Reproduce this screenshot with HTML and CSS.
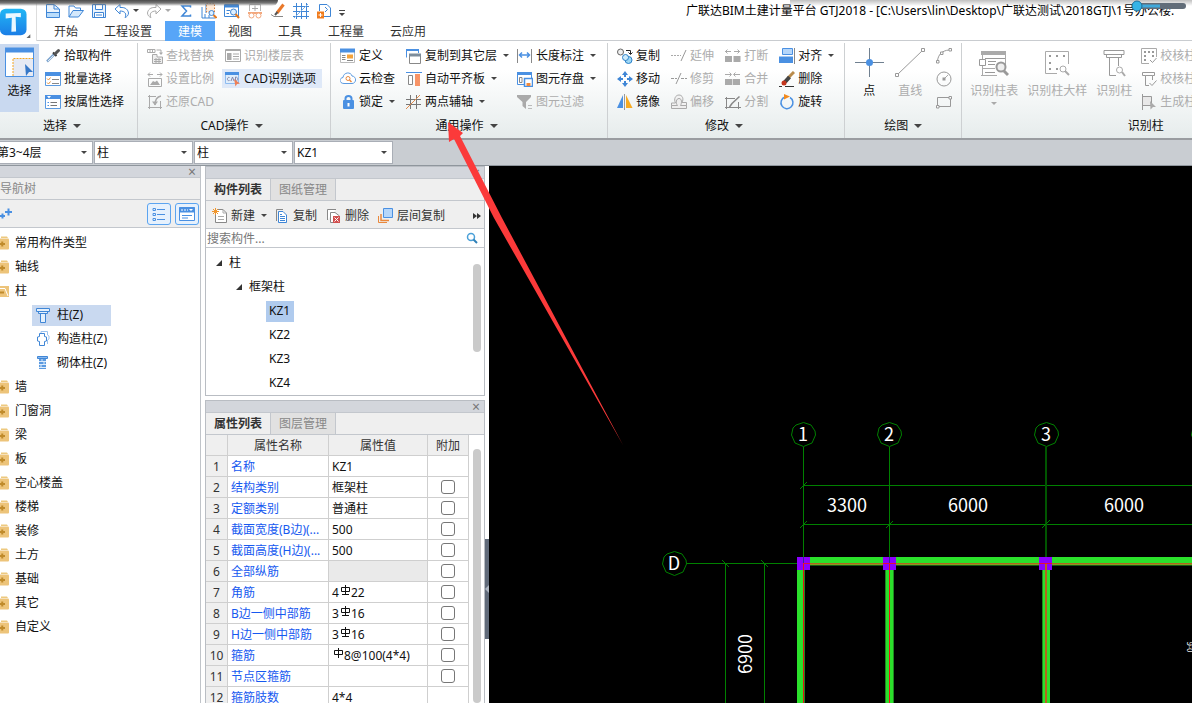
FILE: index.html
```
<!DOCTYPE html>
<html lang="zh-CN">
<head>
<meta charset="utf-8">
<title>广联达BIM土建计量平台 GTJ2018</title>
<link rel="stylesheet" href="styles.css">
</head>
<body>
<svg class="sprite" aria-hidden="true">
  <symbol id="i-doc" viewBox="0 0 16 16"><path d="M1.500 14.500V1.500H9L14.500 6V14.500Z" fill="#eaf3fc" stroke="#3f86d6"/><path d="M9 2V6H14" fill="none" stroke="#3f86d6"/><path d="M2 9H14V14H2Z" fill="#b9dcfb"/><path d="M2 9.500H14" stroke="#3f86d6"/></symbol>
  <symbol id="i-open" viewBox="0 0 16 16"><path d="M1 14V3H6L7.500 5H12.500V7" fill="#fff" stroke="#3f86d6"/><path d="M1 14L5 7.500H15.500L10.500 14Z" fill="#d4e8fb" stroke="#3f86d6"/></symbol>
  <symbol id="i-save" viewBox="0 0 16 16"><path d="M1.500 1.500H14.500V14.500H1.500Z" fill="#eaf3fc" stroke="#3f86d6"/><path d="M4.500 2V6.500H11.500V2M3.500 14V9.500H12.500V14" fill="#fff" stroke="#3f86d6"/><path d="M5 12H11" stroke="#3f86d6"/></symbol>
  <symbol id="i-undo" viewBox="0 0 16 16"><path d="M1 6L6 1.500V4.500C12 4 14 7 14.500 10C14.500 12 13 14 11 14.500C13 11 11 8 6 8V11Z" fill="#fff" stroke="#3f86d6"/></symbol>
  <symbol id="i-redo" viewBox="0 0 16 16"><path d="M15 6L10 1.500V4.500C4 4 2 7 1.500 10C1.500 12 3 14 5 14.500C3 11 5 8 10 8V11Z" fill="#fff" stroke="#aaa"/></symbol>
  <symbol id="i-sum" viewBox="0 0 16 16"><path d="M12.500 4.500V3H4L8.500 8L4 13H12.500V11.500" fill="none" stroke="#3f86d6" stroke-width="1.500"/></symbol>
  <symbol id="i-pick" viewBox="0 0 16 16"><path d="M5 1V10M1 4V15H14M4 11V15M8 12V15" fill="none" stroke="#3f86d6"/><path d="M5.500 0.500H13.500V9H5.500Z" fill="#ffe9d6" stroke="#d9803c" stroke-dasharray="1.500 1.500"/><circle cx="10.500" cy="10" r="2.500" fill="#dff0ff" stroke="#3f86d6"/><path d="M12.500 12L15.500 15" stroke="#e5791e" stroke-width="2"/></symbol>
  <symbol id="i-find" viewBox="0 0 16 16"><path d="M.5 1.500H14.500V13.500H.5Z" fill="#fff" stroke="#3f86d6"/><path d="M1 3H14" stroke="#3f86d6" stroke-width="3"/><path d="M2.500 7.500H6M2.500 10.500H5" stroke="#3f86d6"/><circle cx="9.500" cy="9" r="3" fill="#dff0ff" stroke="#3f86d6"/><path d="M11.500 11L15 15" stroke="#e5791e" stroke-width="2"/></symbol>
  <symbol id="i-goggle" viewBox="0 0 16 16"><path d="M2.500 8V1.500H13.500V8" fill="#fff" stroke="#b5b5b5"/><path d="M5 5.500H11M8 2.500V8" stroke="#aaa"/><path d="M1 10H15" stroke="#f3a77c" stroke-width="2"/><circle cx="4.500" cy="12.500" r="2.500" fill="#fff" stroke="#f3a77c"/><circle cx="11.500" cy="12.500" r="2.500" fill="#fff" stroke="#f3a77c"/></symbol>
  <symbol id="i-pen" viewBox="0 0 16 16"><path d="M13.500 1.500L7 10" stroke="#e9782a" stroke-width="3"/><path d="M7.500 9L5 12" stroke="#555" stroke-width="2"/><path d="M1 11.500L4 13.500H13" fill="none" stroke="#888"/></symbol>
  <symbol id="i-grid" viewBox="0 0 16 16"><path d="M3.500 0V16M8.500 0V16M13.500 0V16M0 3.500H16M0 8.500H16M0 13.500H16" stroke="#3f86d6" fill="none"/><path d="M1 15L15 1" stroke="#7fb0e6"/></symbol>
  <symbol id="i-import" viewBox="0 0 16 16"><path d="M3.500 8V1.500H11L14.500 5V13.500H8" fill="#fff" stroke="#3f86d6"/><path d="M9 4L11.500 6.500L9 9" fill="none" stroke="#3f86d6"/><path d="M1 8.500H8V15.500H1Z" fill="#f07c1e"/><path d="M2.500 12H6.500M4.500 10V14" stroke="#fff"/></symbol>
  <symbol id="i-dropper" viewBox="0 0 16 16"><path d="M2 13.500L9 6.500" stroke="#7fa6cf" stroke-width="2.500"/><path d="M3 13L8.500 7.500" stroke="#dfeaf5"/><path d="M8 4.500L11.500 8" stroke="#333" stroke-width="2"/><path d="M10 6L13.500 2.500" stroke="#555" stroke-width="3" stroke-linecap="round"/></symbol>
  <symbol id="i-batch" viewBox="0 0 16 16"><path d="M.5 1.500H15.500V14.500H.5Z" fill="#fff" stroke="#5b9ae0"/><path d="M0 3H16" stroke="#4a90e2" stroke-width="4"/><path d="M2 7.500L3.500 9L5.500 6.500M2 11.500L3.500 13L5.500 10.500" fill="none" stroke="#e8923a"/><path d="M7 8.500H14M7 12.500H14" stroke="#888"/></symbol>
  <symbol id="i-attr" viewBox="0 0 16 16"><path d="M.5 1.500H15.500V14.500H.5Z" fill="#fff" stroke="#5b9ae0"/><path d="M0 3H16" stroke="#4a90e2" stroke-width="4"/><path d="M2 2H6L4 4.500Z" fill="#fff"/><path d="M5.500 8.500H12M5.500 11.500H12" stroke="#777"/><path d="M2.500 8.500H4M2.500 11.500H4" stroke="#4a90e2"/></symbol>
  <symbol id="i-replace" viewBox="0 0 16 16"><path d="M.5 1.500H8V4.500H.5ZM3 1V5M5.500 1V5M9.500 2H14V5" fill="none" stroke="#aaa"/><path d="M12 4.500H16L14 7Z" fill="#aaa"/><path d="M5.500 6.500H10V9H15.500V15.500H5.500Z" fill="#eee" stroke="#aaa"/><path d="M7 11.500H14M7 13.500H14M9 10V15M12 10V15" stroke="#aaa"/></symbol>
  <symbol id="i-scale" viewBox="0 0 16 16"><path d="M1 3.500H6M10 3.500H15M3 1.500L1 3.500L3 5.500M13 1.500L15 3.500L13 5.500M1.500 7.500H14.500V15.500H1.500Z" fill="none" stroke="#aaa"/><path d="M3 14L6 10L8 11L10 9.500L13 14Z" fill="#aaa"/></symbol>
  <symbol id="i-restore" viewBox="0 0 16 16"><path d="M1 2.500H9M2.500 1V15M1 13.500H15M13.500 7V15" fill="none" stroke="#aaa"/><path d="M14 2C9 3 8 7 8 11" fill="none" stroke="#aaa" stroke-width="1.500"/><path d="M5 7.500H11L8 11.500Z" fill="#aaa"/></symbol>
  <symbol id="i-floor" viewBox="0 0 16 16"><path d="M.5 1.500H15.500V13.500H.5Z" fill="#fff" stroke="#aaa"/><path d="M0 2.500H16M8 6H14M8 8.500H14M8 11H14" stroke="#aaa"/><path d="M2 5H6.500V12H2Z" fill="#aaa"/></symbol>
  <symbol id="i-cadopt" viewBox="0 0 16 16"><path d="M.5 1.500H13.500V12.500H.5Z" fill="#dfeefc" stroke="#8fbcf0"/><path d="M0 2.500H14" stroke="#4a90e2" stroke-width="3"/><path d="M4.500 6.500C2 5.500 1.500 10.500 4.500 9.500M6 10L7.500 6L9 10M10.500 6V10C13.500 10 13.500 6 10.500 6" fill="none" stroke="#88a"/><path d="M9 8L15 12.500L12 13L10.500 15.500Z" fill="#ee7f56"/></symbol>
  <symbol id="i-define" viewBox="0 0 16 16"><path d="M.5 1.500H14.500V14.500H.5Z" fill="#fff" stroke="#bbb"/><path d="M0 2.500H15" stroke="#4a90e2" stroke-width="4"/><path d="M2 7.500H5.500M2 9.500H5.500M2 11.500H5.500M7 12.500H13" stroke="#888"/><path d="M7 6.500H13V10.500H7Z" fill="#f5a33b"/></symbol>
  <symbol id="i-cloud" viewBox="0 0 16 16"><path d="M4 12.500C-1 12.500-1 7 3 6.500C3.500 1 11 .5 12 5C17 5.500 16.500 12.500 12 12.500Z" fill="#fff" stroke="#5b9ae0"/><circle cx="8" cy="7.500" r="2" fill="#fff" stroke="#e9883c"/><path d="M9.500 9L11.500 11" stroke="#e9883c" stroke-width="1.500"/></symbol>
  <symbol id="i-lock" viewBox="0 0 16 16"><path d="M5.500 8V4.500C5.500 1 11.500 1 11.500 4.500V8" fill="none" stroke="#4a90e2" stroke-width="2"/><rect x="3" y="6" width="11" height="9" rx="1" fill="#4a90e2"/><path d="M8.500 9V12.500" stroke="#fff" stroke-width="2"/></symbol>
  <symbol id="i-copyfloor" viewBox="0 0 16 16"><path d="M.5 9.500V1.500H12.500V5" fill="#fff" stroke="#4a90e2"/><path d="M0 2H13" stroke="#4a90e2" stroke-width="2"/><path d="M3.500 6.500H14.500V15.500H3.500Z" fill="#fff" stroke="#888"/><path d="M3 7H15" stroke="#7d8d9b" stroke-width="3"/></symbol>
  <symbol id="i-align-slab" viewBox="0 0 16 16"><path d="M0 1.500H16" stroke="#4a90e2"/><path d="M2.500 4.500H6.500V13.500H2.500Z" fill="#fff" stroke="#888"/><path d="M9 3H14V15H9Z" fill="#f79467"/></symbol>
  <symbol id="i-twopt" viewBox="0 0 16 16"><path d="M4.500 1V15M10.500 1V15M0 5.500H15M0 10.500H15" stroke="#777"/><path d="M0 15L14 1" stroke="#e08a4b"/></symbol>
  <symbol id="i-dim" viewBox="0 0 16 16"><path d="M.5 1V15M14.500 1V15" stroke="#888"/><path d="M3 7H12M5 4.500L2.500 7L5 9.500M10 4.500L12.500 7L10 9.500" fill="none" stroke="#4a90e2" stroke-width="1.500"/></symbol>
  <symbol id="i-store" viewBox="0 0 16 16"><path d="M.5 1.500H14.500V13.500H.5Z" fill="#fff" stroke="#4a90e2"/><path d="M0 2.500H15" stroke="#4a90e2" stroke-width="3"/><path d="M2.500 6.500H5V11.500H2.500Z" fill="#fff" stroke="#888"/><path d="M7.500 7.500H15.500V15.500H7.500Z" fill="#fff" stroke="#4a90e2" stroke-width="1.500"/><path d="M9.500 12H13.500V15H9.500Z" fill="#f28a3c"/></symbol>
  <symbol id="i-filter" viewBox="0 0 16 16"><path d="M0 1H14V3L9 8V15L5.500 12V8L0 3Z" fill="#aaa"/><path d="M11 11.500H15M11 14.500H15" stroke="#bbb"/></symbol>
  <symbol id="i-copy" viewBox="0 0 16 16"><circle cx="3.500" cy="4" r="3" fill="#eee" stroke="#666"/><path d="M9 2.500H13.500V6M11.500 4.500L13.500 6.500L15.500 4.500" fill="none" stroke="#222"/><circle cx="11.500" cy="12" r="3.500" fill="#9fd8f5" stroke="#2a80c8"/><circle cx="8.500" cy="9.500" r="3" fill="#cdeafa" stroke="#2a80c8"/></symbol>
  <symbol id="i-move" viewBox="0 0 16 16"><path d="M8 0L11 4H9V6H7V4H5ZM8 16L11 12H9V10H7V12H5ZM0 8L4 5V7H6V9H4V11ZM16 8L12 5V7H10V9H12V11Z" fill="#3f86d6"/></symbol>
  <symbol id="i-mirror" viewBox="0 0 16 16"><path d="M0 14L6 1V14Z" fill="#4a90e2"/><path d="M7.500 0V16" stroke="#999"/><path d="M9 1L15.500 14H9Z" fill="#f8ab21"/></symbol>
  <symbol id="i-extend" viewBox="0 0 16 16"><path d="M0 7.500H10" stroke="#aaa" stroke-dasharray="2 1"/><path d="M10 13L15 2" stroke="#999"/></symbol>
  <symbol id="i-trim" viewBox="0 0 16 16"><path d="M0 7.500H6M10 7.500H16" stroke="#999" stroke-dasharray="3 1"/><path d="M5 13L10 2" stroke="#999"/></symbol>
  <symbol id="i-offset" viewBox="0 0 16 16"><path d="M.5 12.500V9H4.500C2.500 5 4.500 1 8 1C11.500 1 13 5 11 8.500H15.500V12" fill="#f2f2f2" stroke="#aaa"/><path d="M.5 14.500V11.500H6.500C4.500 9 5 4.500 8 4.500C11 4.500 11 9 9.500 11.500H15.500V14.500Z" fill="#eee" stroke="#aaa"/></symbol>
  <symbol id="i-break" viewBox="0 0 16 16"><path d="M0 3.500H6M9 3.500H15M2.500 1.500L.5 3.500L2.500 5.500M12.500 1.500L14.500 3.500L12.500 5.500" fill="none" stroke="#aaa"/><path d="M0 8H7V14H0ZM8.500 8H15.500V14H8.500Z" fill="#aaa"/></symbol>
  <symbol id="i-merge" viewBox="0 0 16 16"><path d="M0 3.500H6M9 3.500H15M4.500 1.500L6.500 3.500L4.500 5.500M10.500 1.500L8.500 3.500L10.500 5.500" fill="none" stroke="#aaa"/><path d="M0 8H15V14H0Z" fill="#aaa"/><path d="M7.500 8V14" stroke="#ddd"/></symbol>
  <symbol id="i-split" viewBox="0 0 16 16"><path d="M0 4.500H10M1.500 3V15M0 13.500H16M13.500 8V15" fill="none" stroke="#888"/><path d="M14.500 2.500L7 9.500L4.500 13" stroke="#888" stroke-width="1.500" fill="none"/></symbol>
  <symbol id="i-align" viewBox="0 0 16 16"><path d="M3.500 .5H13.500V6.500H3.500Z" fill="#b5d6fa" stroke="#4a90e2"/><path d="M0 8.500H14V15H0Z" fill="#4a90e2"/><path d="M15.500 0V16" stroke="#888"/></symbol>
  <symbol id="i-erase" viewBox="0 0 16 16"><path d="M15 1L9 7" stroke="#b98b4b" stroke-width="3"/><path d="M10.500 6L6 11" stroke="#444" stroke-width="4"/><circle cx="5" cy="12" r="2.500" fill="#c4361e"/><path d="M0 15.500H3M6 15.500H15" stroke="#333"/></symbol>
  <symbol id="i-rotate" viewBox="0 0 16 16"><path d="M11 3.500A6 6 0 1 1 6 3" fill="none" stroke="#4a90e2" stroke-width="1.500"/><path d="M5 0L11 2.500L5 5.500Z" fill="#f28a1e"/></symbol>
  <symbol id="i-arc" viewBox="0 0 16 16"><path d="M1.500 13C2 7 6 2.500 13 2" fill="none" stroke="#999"/><path d="M.5 12.500H3V15H.5ZM4.500 4H7V6.500H4.500ZM13 .5H15.500V3H13Z" fill="#fff" stroke="#999"/></symbol>
  <symbol id="i-circle" viewBox="0 0 16 16"><circle cx="8" cy="8" r="7" fill="none" stroke="#999"/><path d="M8 8L12 4" stroke="#aaa"/><rect x="6.500" y="6.500" width="3" height="3" fill="#999"/></symbol>
  <symbol id="i-rect" viewBox="0 0 16 16"><path d="M1.500 3.500H14.500V12.500H1.500Z" fill="none" stroke="#999"/><path d="M.5 11.500H3V14H.5ZM13 2.500H15.500V5H13Z" fill="#fff" stroke="#999"/></symbol>
  <symbol id="i-chk1" viewBox="0 0 16 16"><path d="M8 15.500H.5V.5H15.500V9" fill="#fff" stroke="#aaa"/><path d="M3 3H5V5H3ZM7 3H9V5H7ZM11 3H13V5H11ZM3 7H5V9H3ZM3 11H5V13H3ZM11 7H13V9H11Z" fill="#999"/><path d="M9 12L11.500 14.500L15.500 10" fill="none" stroke="#999"/></symbol>
  <symbol id="i-chk2" viewBox="0 0 16 16"><path d="M1.500 1.500H13.500V4.500H11.500V9M1.500 1.500V4.500H4.500V14.500H8M4.500 4.500H11.500" fill="none" stroke="#999"/><path d="M8.500 12L11 14.500L15.500 9.500" fill="none" stroke="#999"/></symbol>
  <symbol id="i-gen" viewBox="0 0 16 16"><path d="M1.500 0V16M1.500 2.500H10.500V11.500H1.500" fill="#e8e8e8" stroke="#999"/><path d="M9 7L15 13H12L9.500 15.500Z" fill="#aaa"/></symbol>
  <symbol id="i-new" viewBox="0 0 16 16"><path d="M3.500 6V14.500H14.500V5L11 1.500H6" fill="#fff" stroke="#888"/><path d="M11 1.500V5H14.500M6 8.500H12M6 11.500H12" fill="none" stroke="#aaa"/><path d="M1 1L6 6M6 1L1 6M3.500 0V7M0 3.500H7" stroke="#f0952b"/></symbol>
  <symbol id="i-pcopy" viewBox="0 0 16 16"><path d="M2.500 13V1.500H9" fill="none" stroke="#888"/><path d="M4.500 3.500H9L12.500 7V14.500H4.500Z" fill="#fff" stroke="#3f86d6"/><path d="M6 8.500H11M6 10.500H11M6 12.500H11M6 6.500H8" stroke="#3f86d6"/></symbol>
  <symbol id="i-pdel" viewBox="0 0 16 16"><path d="M1.500 12V1.500H10M4.500 13V4.500H9L13.500 8V14.500H4.500Z" fill="#fff" stroke="#888"/><path d="M7 8H14V15H7Z" fill="#d14f4f"/><path d="M8.500 9.500L12.500 13.500M12.500 9.500L8.500 13.500" stroke="#fff"/></symbol>
  <symbol id="i-layer" viewBox="0 0 16 16"><path d="M.5 8V14.500H9" fill="none" stroke="#e9883c"/><path d="M3 6V12.500H11" fill="none" stroke="#e9883c" stroke-width="1.500"/><path d="M5.500 .5H14.500V9.500H5.500Z" fill="#b5d6fa" stroke="#4a90e2"/></symbol>
  <symbol id="i-search" viewBox="0 0 16 16"><circle cx="7" cy="7" r="3.500" fill="#fff" stroke="#4aa0d8" stroke-width="1.500"/><path d="M9.500 9.500L13 13" stroke="#2f80b8" stroke-width="2"/></symbol>
  <symbol id="i-folder" viewBox="0 0 16 16"><path d="M8 1.500H14L15 3H8Z" fill="#edc97f"/><rect x="0" y="3.500" width="16" height="11" rx="1" fill="#edc47a"/><path d="M6.500 9H12M9.250 6.500V11.500" stroke="#c08b2c" stroke-width="2"/></symbol>
  <symbol id="i-folder-open" viewBox="0 0 16 16"><path d="M0 3H16V14H0Z" fill="#edc47a"/><path d="M6 5.500H12L15 13" fill="none" stroke="#fff"/><path d="M6 9.500H11" stroke="#c08b2c" stroke-width="2"/></symbol>
  <symbol id="i-col" viewBox="0 0 16 16"><path d="M1.500 1.500H14.500V4.500H1.500ZM3.500 4.500V6.500H12.500V4.500M5.500 6.500V15.500H10.500V6.500" fill="#e4f0fc" stroke="#3f86d6"/></symbol>
  <symbol id="i-col2" viewBox="0 0 16 16"><path d="M6 2V.5H12.500V4L14 5V8L12.500 9V13" fill="none" stroke="#9cc2ee"/><path d="M4.500 2.500H9.500V5.500L11.500 6V10L9.500 10.500V14.500H4.500V10.500L2.500 10V6L4.500 5.500Z" fill="#fff" stroke="#3f86d6"/></symbol>
  <symbol id="i-col3" viewBox="0 0 16 16"><path d="M2.500 1.500H12.500V3.500H2.500Z" fill="#8bb9ee" stroke="#3f86d6"/><path d="M4 4H11V14H4Z" fill="#5b9ae0"/><path d="M4 6.500H11M4 9.500H11M4 12.500H11M7 4V6M9 7V9M6 10V12" stroke="#dcebfb"/></symbol>
  <symbol id="i-rebar" viewBox="0 0 12 12"><path d="M6.500 0V10M3 9.500H10M2.500 2.500H10.500V6.500H2.500Z" fill="none" stroke="#111"/></symbol>
  <symbol id="i-rebar2" viewBox="0 0 12 12"><path d="M6.500 0V10M2.500 2.500H10.500V6.500H2.500Z" fill="none" stroke="#111"/></symbol>
</svg>

<div class="app">
  <header class="top">
    <button class="logo" aria-label="主菜单">
      <svg width="38" height="41" viewBox="0 0 38 41"><defs><linearGradient id="lg" x1="0" y1="0" x2="0" y2="1"><stop offset="0" stop-color="#21b7f5"/><stop offset="1" stop-color="#1b7ee6"/></linearGradient></defs><rect x="0" y="8" width="28" height="28" rx="6" fill="url(#lg)"/><path d="M6 13L22 12.500V17L16.500 16.500L17 32L12 32.500L12.500 17.500L6 18.500Z" fill="#eaf8ff"/><path d="M32 35V39H28Z" fill="#666"/></svg>
    </button>
    <div class="top-main">
      <div class="titlebar">
        <nav class="quick" aria-label="快速访问">
          <button aria-label="新建工程"><svg class="ic"><use href="#i-doc"/></svg></button>
          <button aria-label="打开"><svg class="ic"><use href="#i-open"/></svg></button>
          <button aria-label="保存"><svg class="ic"><use href="#i-save"/></svg></button>
          <button aria-label="撤销"><svg class="ic"><use href="#i-undo"/></svg><i class="arr"></i></button>
          <button aria-label="重做"><svg class="ic"><use href="#i-redo"/></svg><i class="arr dim"></i></button>
          <button aria-label="汇总"><svg class="ic"><use href="#i-sum"/></svg></button>
          <button aria-label="查看"><svg class="ic"><use href="#i-pick"/></svg></button>
          <button aria-label="查找"><svg class="ic"><use href="#i-find"/></svg></button>
          <button aria-label="检查"><svg class="ic"><use href="#i-goggle"/></svg></button>
          <button aria-label="编辑"><svg class="ic"><use href="#i-pen"/></svg></button>
          <button aria-label="轴网"><svg class="ic"><use href="#i-grid"/></svg></button>
          <button aria-label="导入"><svg class="ic"><use href="#i-import"/></svg></button>
          <button class="more" aria-label="更多"><i class="arr"></i></button>
        </nav>
        <div class="title">广联达BIM土建计量平台 GTJ2018 - [C:\Users\lin\Desktop\广联达测试\2018GTJ\1号办公楼.</div>
      </div>
      <nav class="tabs">
        <button>开始</button><button>工程设置</button><button class="on">建模</button><button>视图</button><button>工具</button><button>工程量</button><button>云应用</button>
      </nav>
    </div>
  </header>

  <section class="ribbon">
    <div class="group g-first">
      <div class="cols">
        <button class="big sel"><svg width="29" height="30" viewBox="0 0 29 30"><path d="M.5 1.500H28.500V29.500H.5Z" fill="#fff" stroke="#4a90e2"/><path d="M0 3H29" stroke="#4a90e2" stroke-width="5"/><path d="M8 11.500H28V29H8Z" fill="#e6eaf4"/><path d="M8 29V11.500H28" fill="none" stroke="#f5a623" stroke-dasharray="2 1"/><path d="M20 17L28 25H24L21 29Z" fill="#3778c8"/></svg>选择</button>
        <div class="col">
          <button class="tb"><svg class="ic"><use href="#i-dropper"/></svg>拾取构件</button>
          <button class="tb"><svg class="ic"><use href="#i-batch"/></svg>批量选择</button>
          <button class="tb"><svg class="ic"><use href="#i-attr"/></svg>按属性选择</button>
        </div>
      </div>
      <button class="glabel">选择<i class="arr lg"></i></button>
    </div>
    <div class="group">
      <div class="cols">
        <div class="col">
          <button class="tb off"><svg class="ic"><use href="#i-replace"/></svg>查找替换</button>
          <button class="tb off"><svg class="ic"><use href="#i-scale"/></svg>设置比例</button>
          <button class="tb off"><svg class="ic"><use href="#i-restore"/></svg>还原CAD</button>
        </div>
        <div class="col">
          <button class="tb off"><svg class="ic"><use href="#i-floor"/></svg>识别楼层表</button>
          <button class="tb hot"><svg class="ic"><use href="#i-cadopt"/></svg>CAD识别选项</button>
        </div>
      </div>
      <button class="glabel">CAD操作<i class="arr lg"></i></button>
    </div>
    <div class="group">
      <div class="cols">
        <div class="col">
          <button class="tb"><svg class="ic"><use href="#i-define"/></svg>定义</button>
          <button class="tb"><svg class="ic"><use href="#i-cloud"/></svg>云检查</button>
          <button class="tb"><svg class="ic"><use href="#i-lock"/></svg>锁定<i class="arr"></i></button>
        </div>
        <div class="col">
          <button class="tb"><svg class="ic"><use href="#i-copyfloor"/></svg>复制到其它层<i class="arr"></i></button>
          <button class="tb"><svg class="ic"><use href="#i-align-slab"/></svg>自动平齐板<i class="arr"></i></button>
          <button class="tb"><svg class="ic"><use href="#i-twopt"/></svg>两点辅轴<i class="arr"></i></button>
        </div>
        <div class="col">
          <button class="tb"><svg class="ic"><use href="#i-dim"/></svg>长度标注<i class="arr"></i></button>
          <button class="tb"><svg class="ic"><use href="#i-store"/></svg>图元存盘<i class="arr"></i></button>
          <button class="tb off"><svg class="ic"><use href="#i-filter"/></svg>图元过滤</button>
        </div>
      </div>
      <button class="glabel">通用操作<i class="arr lg"></i></button>
    </div>
    <div class="group g-edit">
      <div class="cols">
        <div class="col">
          <button class="tb"><svg class="ic"><use href="#i-copy"/></svg>复制</button>
          <button class="tb"><svg class="ic"><use href="#i-move"/></svg>移动</button>
          <button class="tb"><svg class="ic"><use href="#i-mirror"/></svg>镜像</button>
        </div>
        <div class="col">
          <button class="tb off"><svg class="ic"><use href="#i-extend"/></svg>延伸</button>
          <button class="tb off"><svg class="ic"><use href="#i-trim"/></svg>修剪</button>
          <button class="tb off"><svg class="ic"><use href="#i-offset"/></svg>偏移</button>
        </div>
        <div class="col">
          <button class="tb off"><svg class="ic"><use href="#i-break"/></svg>打断</button>
          <button class="tb off"><svg class="ic"><use href="#i-merge"/></svg>合并</button>
          <button class="tb off"><svg class="ic"><use href="#i-split"/></svg>分割</button>
        </div>
        <div class="col">
          <button class="tb"><svg class="ic"><use href="#i-align"/></svg>对齐<i class="arr"></i></button>
          <button class="tb"><svg class="ic"><use href="#i-erase"/></svg>删除</button>
          <button class="tb"><svg class="ic"><use href="#i-rotate"/></svg>旋转</button>
        </div>
      </div>
      <button class="glabel">修改<i class="arr lg"></i></button>
    </div>
    <div class="group g-draw">
      <div class="cols">
        <button class="big"><svg width="30" height="30" viewBox="0 0 30 30"><path d="M1 15.500H30M15.500 1V30" stroke="#708090"/><circle cx="15.500" cy="15.500" r="3.500" fill="#4a90e2"/></svg>点</button>
        <button class="big off"><svg width="30" height="30" viewBox="0 0 30 30"><path d="M2 28L28 3" stroke="#999"/><path d="M.5 26.500H3.500V29.500H.5ZM26.500 1.500H29.500V4.500H26.500Z" fill="#fff" stroke="#999"/></svg>直线</button>
        <div class="col">
          <button class="tb off" aria-label="弧"><svg class="ic"><use href="#i-arc"/></svg></button>
          <button class="tb off" aria-label="圆"><svg class="ic"><use href="#i-circle"/></svg></button>
          <button class="tb off" aria-label="矩形"><svg class="ic"><use href="#i-rect"/></svg></button>
        </div>
      </div>
      <button class="glabel">绘图<i class="arr lg"></i></button>
    </div>
    <div class="group g-rec">
      <div class="cols">
        <button class="big off"><svg width="30" height="30" viewBox="0 0 30 30"><path d="M2 28.500H18M3.500 8V28M26.500 8V18M3 21.500H16" fill="none" stroke="#aaa"/><path d="M2 6H27" stroke="#aaa" stroke-width="4"/><path d="M6 11.500H26M9 14.500H17M9 17.500H16M6 25.500H16" stroke="#999"/><path d="M.5 12.500H6.500V18.500H.5Z" fill="#fff" stroke="#999"/><circle cx="22" cy="20" r="4.500" fill="#eee" stroke="#999" stroke-width="2"/><path d="M25 24L29 28" stroke="#999" stroke-width="3"/></svg>识别柱表<i class="arr dim"></i></button>
        <button class="big off"><svg width="30" height="30" viewBox="0 0 30 30"><path d="M15 26.500H3.500V4.500H26.500V17" fill="none" stroke="#aaa"/><path d="M7 8H9V10H7ZM14 8H16V10H14ZM21 8H23V10H21ZM7 15H9V17H7ZM7 21H9V23H7ZM14 21H16V23H14Z" fill="#999"/><circle cx="21" cy="22" r="3" fill="none" stroke="#aaa"/><path d="M23 24L27 28" stroke="#aaa" stroke-width="2"/></svg>识别柱大样</button>
        <button class="big off"><svg width="30" height="30" viewBox="0 0 30 30"><path d="M5 3.500H25V7.500H5ZM7.500 7.500V10.500H22.500V7.500M10.500 10.500V28.500H17M19.500 10.500V19" fill="none" stroke="#999"/><circle cx="20.500" cy="23" r="3" fill="none" stroke="#aaa"/><path d="M23 25L26 29" stroke="#aaa" stroke-width="2"/></svg>识别柱</button>
        <div class="col">
          <button class="tb off"><svg class="ic"><use href="#i-chk1"/></svg>校核柱大样</button>
          <button class="tb off"><svg class="ic"><use href="#i-chk2"/></svg>校核柱图元</button>
          <button class="tb off"><svg class="ic"><use href="#i-gen"/></svg>生成柱构件</button>
        </div>
      </div>
      <button class="glabel">识别柱</button>
    </div>
  </section>

  <section class="combos">
    <span class="combo"><select class="first" aria-label="楼层"><option>第3~4层</option></select></span>
    <span class="combo"><select aria-label="构件大类"><option>柱</option></select></span>
    <span class="combo"><select aria-label="构件类型"><option>柱</option></select></span>
    <span class="combo"><select aria-label="构件"><option>KZ1</option></select></span>
  </section>

  <main class="work">
    <aside class="nav">
      <div class="strip"><button aria-label="关闭导航树">×</button></div>
      <h2 class="nav-h">导航树</h2>
      <div class="nav-tools">
        <button class="plus" aria-label="展开"><svg width="12" height="14" viewBox="0 0 12 14"><path d="M0 9H5M2.500 6.500V11.500M5 5H12M8.500 1.500V8.500" stroke="#4a90e2" stroke-width="2"/></svg></button>
        <button class="view" aria-label="列表视图"><svg width="14" height="14" viewBox="0 0 14 14"><path d="M1 1.500H3.500V3.500H1ZM1 6.500H3.500V8.500H1ZM1 11.500H3.500V13.500H1ZM5 2.500H13M5 7.500H13M5 12.500H13" fill="none" stroke="#4a90e2"/></svg></button>
        <button class="view" aria-label="面板视图"><svg width="16" height="14" viewBox="0 0 16 14"><path d="M.5 .5H15.500V13.500H.5Z" fill="#fff" stroke="#4a90e2"/><path d="M0 3H16" stroke="#4a90e2" stroke-width="5"/><path d="M2 3H9" stroke="#fff" stroke-dasharray="2 1"/><path d="M10 2H14L12 4Z" fill="#fff"/><path d="M3 8.500H13M3 11H9" stroke="#4a90e2"/></svg></button>
      </div>
      <ul class="tree">
        <li><svg class="ic"><use href="#i-folder"/></svg>常用构件类型</li>
        <li><svg class="ic"><use href="#i-folder"/></svg>轴线</li>
        <li><svg class="ic"><use href="#i-folder-open"/></svg>柱</li>
        <li class="sub"><span class="cur"><svg class="ic"><use href="#i-col"/></svg>柱(Z)</span></li>
        <li class="sub"><span><svg class="ic"><use href="#i-col2"/></svg>构造柱(Z)</span></li>
        <li class="sub"><span><svg class="ic"><use href="#i-col3"/></svg>砌体柱(Z)</span></li>
        <li><svg class="ic"><use href="#i-folder"/></svg>墙</li>
        <li><svg class="ic"><use href="#i-folder"/></svg>门窗洞</li>
        <li><svg class="ic"><use href="#i-folder"/></svg>梁</li>
        <li><svg class="ic"><use href="#i-folder"/></svg>板</li>
        <li><svg class="ic"><use href="#i-folder"/></svg>空心楼盖</li>
        <li><svg class="ic"><use href="#i-folder"/></svg>楼梯</li>
        <li><svg class="ic"><use href="#i-folder"/></svg>装修</li>
        <li><svg class="ic"><use href="#i-folder"/></svg>土方</li>
        <li><svg class="ic"><use href="#i-folder"/></svg>基础</li>
        <li><svg class="ic"><use href="#i-folder"/></svg>其它</li>
        <li><svg class="ic"><use href="#i-folder"/></svg>自定义</li>
      </ul>
    </aside>

    <div class="mid">
      <section class="panel comp">
        <div class="strip"><button aria-label="关闭构件列表">×</button></div>
        <div class="ptabs"><button class="on">构件列表</button><button>图纸管理</button></div>
        <div class="ptools">
          <button><svg class="ic"><use href="#i-new"/></svg>新建<i class="arr"></i></button>
          <button><svg class="ic"><use href="#i-pcopy"/></svg>复制</button>
          <button><svg class="ic"><use href="#i-pdel"/></svg>删除</button>
          <button><svg class="ic"><use href="#i-layer"/></svg>层间复制</button>
          <button class="ff" aria-label="更多"><svg width="8" height="8" viewBox="0 0 8 8"><path d="M0 1L4 4L0 7ZM4 1L8 4L4 7Z" fill="#333"/></svg></button>
        </div>
        <div class="search"><input type="text" placeholder="搜索构件..." aria-label="搜索构件"><svg class="ic"><use href="#i-search"/></svg></div>
        <div class="scroller">
          <ul class="ctree">
            <li class="l1"><i class="tw"></i>柱</li>
            <li class="l2"><i class="tw"></i>框架柱</li>
            <li class="l3"><span class="cur">KZ1</span></li>
            <li class="l3"><span>KZ2</span></li>
            <li class="l3"><span>KZ3</span></li>
            <li class="l3"><span>KZ4</span></li>
          </ul>
          <div class="sbar"><div class="thumb short"></div></div>
        </div>
      </section>
      <section class="panel props">
        <div class="strip"><button aria-label="关闭属性列表">×</button></div>
        <div class="ptabs"><button class="on">属性列表</button><button>图层管理</button></div>
        <div class="scroller">
          <table>
            <thead><tr><th class="c0"></th><th class="c1">属性名称</th><th class="c2">属性值</th><th class="c3">附加</th></tr></thead>
            <tbody>
              <tr><th>1</th><td class="n">名称</td><td>KZ1</td><td></td></tr>
              <tr><th>2</th><td class="n">结构类别</td><td>框架柱</td><td><input type="checkbox" aria-label="结构类别 附加"></td></tr>
              <tr><th>3</th><td class="n">定额类别</td><td>普通柱</td><td><input type="checkbox" aria-label="定额类别 附加"></td></tr>
              <tr><th>4</th><td class="n">截面宽度(B边)(...</td><td>500</td><td><input type="checkbox" aria-label="截面宽度 附加"></td></tr>
              <tr><th>5</th><td class="n">截面高度(H边)(...</td><td>500</td><td><input type="checkbox" aria-label="截面高度 附加"></td></tr>
              <tr><th>6</th><td class="n">全部纵筋</td><td class="grey"></td><td><input type="checkbox" aria-label="全部纵筋 附加"></td></tr>
              <tr><th>7</th><td class="n">角筋</td><td>4<svg class="rb"><use href="#i-rebar"/></svg>22</td><td><input type="checkbox" aria-label="角筋 附加"></td></tr>
              <tr><th>8</th><td class="n">B边一侧中部筋</td><td>3<svg class="rb"><use href="#i-rebar"/></svg>16</td><td><input type="checkbox" aria-label="B边一侧中部筋 附加"></td></tr>
              <tr><th>9</th><td class="n">H边一侧中部筋</td><td>3<svg class="rb"><use href="#i-rebar"/></svg>16</td><td><input type="checkbox" aria-label="H边一侧中部筋 附加"></td></tr>
              <tr><th>10</th><td class="n">箍筋</td><td><svg class="rb"><use href="#i-rebar2"/></svg>8@100(4*4)</td><td><input type="checkbox" aria-label="箍筋 附加"></td></tr>
              <tr><th>11</th><td class="n">节点区箍筋</td><td></td><td><input type="checkbox" aria-label="节点区箍筋 附加"></td></tr>
              <tr><th>12</th><td class="n">箍筋肢数</td><td>4*4</td><td></td></tr>
            </tbody>
          </table>
          <div class="sbar"><div class="thumb"></div></div>
        </div>
      </section>
    </div>

    <div class="splitter"><button aria-label="折叠面板"><svg width="4" height="8" viewBox="0 0 4 8"><path d="M4 0V8L0 4Z" fill="#aeb6c2"/></svg></button></div>

    <div class="view3d">
      <svg width="100%" height="100%">
        <g fill="none" stroke="#008000">
          <path d="M314.500 281V397M400.500 281V397M314 319.500H703M314 358.500H703M198 397.500H314M236.500 397V537M275.500 397V537"/>
          <path d="M557 281V397" stroke="#005500" stroke-width="2"/>
          <path d="M311 323L318 316M311 362L318 355M397 362L404 355M553 362L561 354M233 394L240 401M272 394L279 401"/>
          <path id="bub" d="M314.500 256.500L322 259L326 265L326.500 269L323 277L314.500 280.500L306 277L302.500 269L304 262L307 259Z"/>
          <use href="#bub" x="86"/><use href="#bub" x="243"/><use href="#bub" x="400"/><use href="#bub" x="-129" y="129"/>
        </g>
        <path d="M314 391H703V399H314ZM308 397H316V537H308ZM397 397H404V537H397ZM553 397H561V537H553Z" fill="#2be02b"/>
        <path d="M314 399.500H703" stroke="#145a14"/>
        <path d="M396.500 397V537M404.500 397V537M315.500 397V537M553.500 397V537" stroke="#1f8a1f"/>
        <path d="M314 398.500H703" stroke="#8a9a1e"/>
        <path d="M308 391H321V404H308ZM394 391H407V404H394ZM550 391H563V404H550Z" fill="#8c00ff"/>
        <path d="M321 397.500H703" stroke="#b0621e"/>
        <path d="M314.500 397V537M400.500 397V537" stroke="#e81414"/>
        <path d="M557 397V537" stroke="#b5651d" stroke-width="2"/>
        <path d="M314 397.500H321M394 397.500H407M550 397.500H563" stroke="#e0103c"/>
        <path d="M314.500 391V397M400.500 391V397" stroke="#303090"/>
        <g class="cad">
          <text x="314" y="275">1</text><text x="400" y="275">2</text><text x="557" y="275">3</text><text x="185" y="404">D</text>
          <text x="358" y="346">3300</text><text x="479" y="346">6000</text><text x="635" y="346">6000</text>
          <text x="0" y="0" transform="translate(263 488) rotate(-90)">6900</text>
          <text class="tiny" x="0" y="0" transform="translate(704 481) rotate(-90)">0:6</text>
        </g>
      </svg>
    </div>
  </main>

  <div class="shade left"></div>
  <div class="shade right"></div>
  <svg class="over slider" width="60" height="16" viewBox="0 0 60 16"><rect x="8" y="3" width="48" height="6" rx="3" fill="#626d79"/><path d="M12 6H30" stroke="#3fa9dc" stroke-width="3"/><circle cx="7" cy="6" r="5" fill="#35b4e6" stroke="#1d6f9a"/></svg>
  <svg class="over pointer" width="180" height="326" viewBox="0 0 180 326"><path d="M3 1L4 21L9 18L49 97L178 324L57 97L15 15L18 12Z" fill="#fb3a3a"/></svg>
</div>
</body>
</html>
```

FILE: styles.css
```
* { box-sizing: border-box; }
body {
  margin: 0;
  font: 12px/16px "Noto Sans", "Noto Sans CJK SC", sans-serif;
  color: #111;
  background: #fff;
  overflow: hidden;
}
button {
  font: inherit;
  color: inherit;
  background: none;
  border: 0;
  padding: 0;
  display: inline-flex;
  align-items: center;
  white-space: nowrap;
}
ul { list-style: none; margin: 0; padding: 0; }
.sprite { display: none; }
.ic { width: 16px; height: 16px; flex: none; }
.arr {
  flex: none;
  width: 6px;
  border: 3px solid transparent;
  border-top-color: #444;
  border-bottom: 0;
}
.arr.lg { width: 8px; border-width: 4px 4px 0; }
.arr.dim { border-top-color: #aaa; }

.app { position: relative; display: flex; flex-direction: column; height: 100vh; }

/* title and tabs */
.top { display: flex; flex: none; }
.logo { width: 37px; flex: none; align-items: flex-start; border-right: 1px solid #ddd; overflow: hidden; }
.top-main { flex: 1; min-width: 0; }
.titlebar { display: flex; align-items: center; height: 21px; }
.quick { display: flex; align-items: center; gap: 7px; padding-left: 8px; width: 349px; flex: none; }
.quick .arr { margin-left: 3px; }
.quick .more { border-top: 1px solid #444; padding: 2px 0 0; margin-top: 4px; }
.quick .more .arr { margin: 0; }
.title { flex: 1; min-width: 0; overflow: hidden; white-space: nowrap; margin-left: 300px; color: #000; }
.tabs { display: flex; height: 20px; padding-left: 4px; border-bottom: 1px solid #c9ccd0; }
.tabs button { padding: 2px 13px 0; height: 20px; color: #333; }
.tabs .on { background: #57a5f7; color: #fff; }

/* ribbon */
.ribbon {
  display: flex;
  flex: none;
  padding: 2px 0 0;
  overflow: hidden;
  background: linear-gradient(#fff 30%, #e6ecec);
  border-bottom: 2px solid #9a9da1;
}
.group {
  flex: none;
  display: flex;
  flex-direction: column;
  padding: 1px 14px 0 9px;
  border-right: 1px solid #cdd0d2;
}
.cols { display: flex; gap: 11px; height: 69px; }
.col { display: flex; flex-direction: column; align-items: flex-start; }
.tb { height: 23px; gap: 3px; }
.tb .arr { margin: 0 -3px 0 3px; }
.tb.off, .big.off { color: #adadad; }
.tb.hot { height: 19px; margin: 2px -6px 2px -3px; padding: 0 6px 0 3px; background: #dfe9f8; }
.big { flex-direction: column; padding-top: 3px; gap: 6px; }
.big .arr { margin-top: -3px; }
.big.sel { width: 39px; background: #c9d9f0; margin-bottom: 1px; }
.g-first { padding-left: 0; padding-right: 13px; }
.g-first .cols { gap: 6px; }
.g-edit { padding-right: 13px; }
.g-draw { padding: 1px 9px 0 9px; }
.g-rec { width: 373px; padding-left: 8px; border-right: 0; }
.g-rec .cols { gap: 9px; }
.glabel { height: 25px; gap: 6px; align-self: center; }

/* selectors */
.combos {
  display: flex;
  flex: none;
  gap: 1px;
  padding: 1px 0;
  background: #c9cdd2;
  border-bottom: 1px solid #8f969d;
}
.combo { position: relative; width: 99px; }
.combo:first-child { width: 93px; }
.combo::after {
  content: "";
  position: absolute;
  right: 6px;
  top: 10px;
  border: 3px solid transparent;
  border-top-color: #444;
  border-bottom: 0;
  pointer-events: none;
}
select {
  appearance: none;
  width: 100%;
  height: 23px;
  padding: 0 0 0 2px;
  font: inherit;
  color: #111;
  background: #fff;
  border: 1px solid #a9aeb6;
  border-radius: 0;
}
select.first { border-left: 0; padding: 0; text-indent: -3px; }

/* work area */
.work { display: flex; flex: 1; min-height: 0; overflow: hidden; }
.strip {
  display: flex;
  justify-content: flex-end;
  flex: none;
  height: 12px;
  padding-right: 4px;
  background: #d3d6dc;
  border-bottom: 1px solid #c3c7cd;
}
.strip button { color: #777; font-size: 14px; line-height: 10px; }
.nav { width: 201px; flex: none; border-right: 1px solid #c0c4c9; overflow: hidden; }
.nav-h { margin: 0; height: 22px; font: inherit; line-height: 22px; color: #888; background: #efefef; border-bottom: 1px solid #c3c7cd; }
.nav-tools { display: flex; align-items: center; gap: 4px; height: 28px; padding-right: 1px; background: #efefef; border-bottom: 1px solid #c3c7cd; }
.plus { margin-right: auto; }
.view { width: 24px; height: 22px; justify-content: center; background: #e6f1fd; border: 1px solid #5ba4f0; border-radius: 3px; }
.tree { padding-top: 3px; }
.tree li { display: flex; align-items: center; height: 24px; gap: 6px; margin-left: -7px; }
.tree .sub { margin-left: 32px; }
.tree span { display: flex; align-items: center; gap: 6px; height: 21px; padding: 0 28px 0 3px; }
.tree .cur { background: #c9d9f0; }

.mid { display: flex; flex-direction: column; gap: 4px; width: 280px; margin-left: 4px; flex: none; }
.panel { border: 1px solid #b9bdc3; overflow: hidden; display: flex; flex-direction: column; flex: none; }
.props { flex: 1; border-bottom: 0; }
.ptabs { display: flex; flex: none; height: 22px; background: #efefef; border-bottom: 1px solid #c3c7cd; }
.ptabs button { padding: 0 8px; color: #888; background: #e1e1e1; border-right: 1px solid #c3c7cd; }
.ptabs .on { color: #333; font-weight: bold; background: #efefef; }
.ptools { display: flex; align-items: center; height: 28px; padding: 2px 3px 0 6px; gap: 9px; background: #efefef; border-bottom: 1px solid #c3c7cd; color: #333; }
.ptools button { gap: 3px; }
.ptools .arr { margin: 0 -2px 0 3px; }
.ptools .ff { margin-left: auto; }
.search { display: flex; align-items: center; height: 19px; border-bottom: 1px solid #c3c7cd; padding-right: 4px; }
.search input { flex: 1; min-width: 0; height: 18px; border: 0; padding: 0 1px; font: inherit; background: #fff; }
.search input::placeholder { color: #777; }
.scroller { display: flex; flex: 1; min-height: 0; }
.ctree { flex: 1; padding: 3px 0 0; }
.ctree li { display: flex; align-items: center; height: 24px; gap: 7px; }
.ctree .l1 { padding-left: 10px; }
.ctree .l2 { padding-left: 30px; }
.ctree .l3 { padding-left: 60px; }
.ctree span { height: 21px; line-height: 20px; padding: 0 4px 0 3px; }
.ctree .cur { background: #b0cbee; }
.tw { border: 3px solid transparent; border-right-color: #333; border-bottom-color: #333; }
.sbar { width: 15px; flex: none; padding: 14px 3px 0 4px; }
.thumb { width: 8px; height: 100%; border-radius: 4px; background: #cacaca; }
.sbar .short { height: 88px; }
.comp .sbar { padding-top: 16px; }

table { flex: 1; border-collapse: separate; border-spacing: 0; table-layout: fixed; align-self: flex-start; }
.c0 { width: 22px; }
.c1 { width: 101px; }
.c2 { width: 99px; }
.c3 { width: 41px; }
th, td { height: 21px; padding: 2px 0 0 3px; border: solid #cfcfcf; border-width: 0 1px 1px 0; line-height: 16px; white-space: nowrap; overflow: hidden; text-align: left; }
th { background: #efefef; font-weight: normal; color: #333; text-align: center; padding: 2px 0 0; }
td.n { color: #1659f0; }
td.grey { background: #eaeaea; }
td:last-child { text-align: center; padding: 0; }
td input { appearance: none; display: block; width: 14px; height: 14px; margin: 0 auto; border: 1px solid #777; border-radius: 3px; background: #fff; }
.rb { width: 12px; height: 12px; }

.splitter { display: flex; flex-direction: column; width: 4px; flex: none; background: #fff; }
.splitter button { height: 100px; margin: auto 0 64px; background: #616b7a; }
.view3d { flex: 1; min-width: 0; background: #000; overflow: hidden; }
.view3d svg { display: block; }
.cad text { fill: #fff; font: 18px "Noto Sans CJK SC", sans-serif; text-anchor: middle; }
.cad .tiny { font-size: 8px; }

/* overlays */
.shade { position: absolute; top: 0; height: 6px; pointer-events: none; }
.shade.left { left: 0; width: 278px; background: linear-gradient(#4a4a4a, #777 50%, #7770); border-radius: 0 0 6px 0; }
.shade.right { left: 790px; right: 0; background: linear-gradient(#8888, #8880); }
.over { position: absolute; pointer-events: none; }
.slider { right: 2px; top: 0; }
.pointer { left: 445px; top: 121px; }
```
